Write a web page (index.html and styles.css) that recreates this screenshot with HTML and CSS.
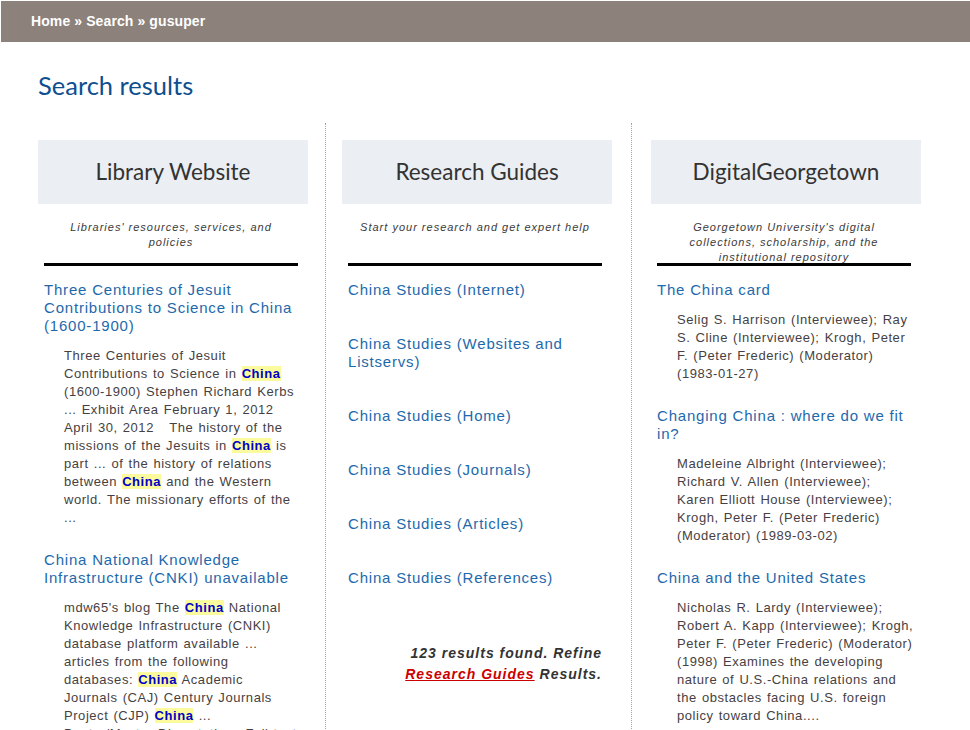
FILE: index.html
```html
<!DOCTYPE html>
<html lang="en">
<head>
<meta charset="utf-8">
<title>Search results</title>
<link rel="stylesheet" href="styles.css">
</head>
<body>
<nav class="crumbs"><a href="#">Home</a> » <a href="#">Search</a> » gusuper</nav>
<main class="page">
  <h1 class="page-title">Search results</h1>
  <div class="columns">
    <section class="col col-first">
      <h2 class="col-head">Library Website</h2>
      <div class="col-body">
        <p class="col-desc">Libraries' resources, services, and policies</p>
        <hr class="rule">
        <div class="item">
          <a class="item-title" href="#">Three Centuries of Jesuit Contributions to Science in China (1600-1900)</a>
          <p class="snippet">Three Centuries of Jesuit Contributions to Science in <mark>China</mark> (1600-1900) Stephen Richard Kerbs ... Exhibit Area February 1, 2012 April 30, 2012 &nbsp; The history of the missions of the Jesuits in <mark>China</mark> is part ... of the history of relations between <mark>China</mark> and the Western world. The missionary efforts of the ...</p>
        </div>
        <div class="item">
          <a class="item-title" href="#">China National Knowledge Infrastructure (CNKI) unavailable</a>
          <p class="snippet">mdw65's blog The <mark>China</mark> National Knowledge Infrastructure (CNKI) database platform available ... articles from the following databases: <mark>China</mark> Academic Journals (CAJ) Century Journals Project (CJP) <mark>China</mark> ... Doctor/Master Dissertations Full-text Database ...</p>
        </div>
      </div>
    </section>
    <section class="col col-mid">
      <h2 class="col-head">Research Guides</h2>
      <div class="col-body">
        <p class="col-desc">Start your research and get expert help</p>
        <hr class="rule">
        <div class="guide"><a class="item-title" href="#">China Studies (Internet)</a></div>
        <div class="guide"><a class="item-title" href="#">China Studies (Websites and Listservs)</a></div>
        <div class="guide"><a class="item-title" href="#">China Studies (Home)</a></div>
        <div class="guide"><a class="item-title" href="#">China Studies (Journals)</a></div>
        <div class="guide"><a class="item-title" href="#">China Studies (Articles)</a></div>
        <div class="guide"><a class="item-title" href="#">China Studies (References)</a></div>
        <p class="found">123 results found. Refine <a href="#">Research Guides</a> Results.</p>
      </div>
    </section>
    <section class="col col-last">
      <h2 class="col-head">DigitalGeorgetown</h2>
      <div class="col-body">
        <p class="col-desc">Georgetown University's digital collections, scholarship, and the institutional repository</p>
        <hr class="rule">
        <div class="item">
          <a class="item-title" href="#">The China card</a>
          <p class="snippet">Selig S. Harrison (Interviewee); Ray S. Cline (Interviewee); Krogh, Peter F. (Peter Frederic) (Moderator) (1983-01-27)</p>
        </div>
        <div class="item">
          <a class="item-title" href="#">Changing China : where do we fit in?</a>
          <p class="snippet">Madeleine Albright (Interviewee); Richard V. Allen (Interviewee); Karen&nbsp;Elliott House (Interviewee); Krogh, Peter F. (Peter Frederic) (Moderator) (1989-03-02)</p>
        </div>
        <div class="item">
          <a class="item-title" href="#">China and the United States</a>
          <p class="snippet">Nicholas R. Lardy (Interviewee); Robert A. Kapp (Interviewee); Krogh, Peter F. (Peter Frederic) (Moderator) (1998) Examines the developing nature of U.S.-China relations and the obstacles facing U.S. foreign policy toward China....</p>
        </div>
      </div>
    </section>
  </div>
</main>
</body>
</html>
```
FILE: styles.css
```css
html, body {
  margin: 0;
  background: #ffffff;
}
body {
  padding: 1px 0 0 1px;
  font-family: "Liberation Sans", Arial, sans-serif;
}
.crumbs {
  background: #8c817b;
  color: #ffffff;
  height: 41px;
  line-height: 40px;
  padding-left: 30px;
  font-size: 14px;
  font-weight: bold;
  letter-spacing: 0.1px;
}
.crumbs a {
  color: #ffffff;
  text-decoration: none;
}
.page {
  padding-left: 37px;
}
.page-title {
  margin: 27px 0 22px;
  font-family: Lato, "Open Sans", sans-serif;
  font-weight: normal;
  font-size: 25.5px;
  line-height: 32px;
  color: #0d4f90;
}
.columns {
  display: grid;
  grid-template-columns: 287px 306px 290px;
}
.col {
  padding-top: 17px;
  padding-bottom: 40px;
}
.col-first {
  padding-right: 17px;
}
.col-mid {
  border-left: 1px dotted #9aa6b6;
  padding-left: 16px;
  padding-right: 19px;
}
.col-last {
  border-left: 1px dotted #9aa6b6;
  padding-left: 19px;
}
.col-head {
  margin: 0;
  width: 270px;
  height: 64px;
  padding-bottom: 2px;
  box-sizing: border-box;
  background: #ebeef2;
  font-family: Lato, "Open Sans", sans-serif;
  font-weight: normal;
  font-size: 22.5px;
  color: #333333;
  display: flex;
  align-items: center;
  justify-content: center;
}
.col-body {
  width: 254px;
  margin-left: 6px;
}
.col-desc {
  margin: 16px 8px 0;
  height: 43px;
  font-size: 11px;
  line-height: 15px;
  font-style: italic;
  letter-spacing: 1px;
  color: #3a3a3a;
  text-align: center;
}
.rule {
  margin: 0;
  border: 0;
  height: 3px;
  background: #000000;
  position: relative;
}
.item, .guide {
  margin-top: 15px;
}
.guide + .guide {
  margin-top: 36px;
}
.item + .item {
  margin-top: 24px;
}
.item-title {
  display: block;
  font-size: 15px;
  line-height: 18px;
  letter-spacing: 0.8px;
  color: #1e69ab;
  text-decoration: none;
}
.snippet {
  margin: 12px 0 0 20px;
  font-size: 13px;
  line-height: 18px;
  letter-spacing: 0.55px;
  word-spacing: 1px;
  color: #463f43;
}
.col-last .snippet {
  margin-right: -3.2px;
}
mark {
  background: #fbfb9e;
  color: #0000c8;
  font-weight: bold;
}
.found {
  margin: 56px 0 0;
  text-align: right;
  font-size: 14px;
  line-height: 21px;
  font-weight: bold;
  font-style: italic;
  letter-spacing: 1px;
  color: #333333;
}
.found a {
  color: #cc0000;
}
```
